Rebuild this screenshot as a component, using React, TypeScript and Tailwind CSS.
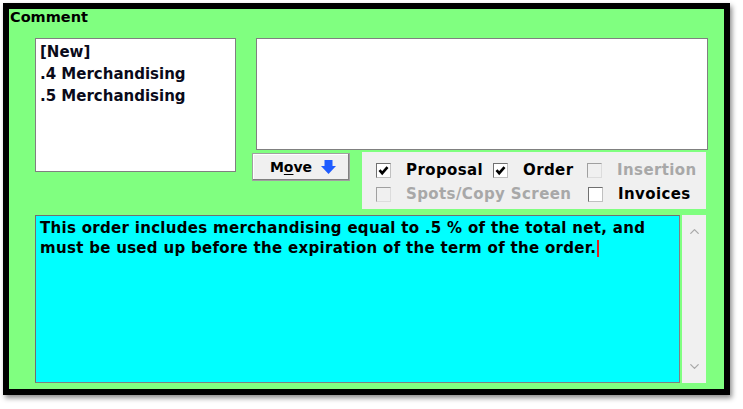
import React from "react";
import { ChevronUp, ChevronDown } from "lucide-react";

const font = "font-['DejaVu_Sans',sans-serif]";

const Check: React.FC<{ checked?: boolean; disabled?: boolean }> = ({ checked, disabled }) => (
    <span
        className={
            "inline-flex w-[15px] h-[15px] items-center justify-center border " +
            (disabled
                ? "border-t-[#a0a0a0] border-l-[#a0a0a0] border-b-[#dcdcdc] border-r-[#dcdcdc] bg-[#f0f0f0]"
                : "border-t-[#707070] border-l-[#707070] border-b-[#c0c0c0] border-r-[#c0c0c0] bg-white")
        }
    >
        {checked && (
            <svg width="11" height="11" viewBox="0 0 11 11">
                <path d="M1.5 5.2 L4.2 8.2 L9.5 2.2" fill="none" stroke="#000" strokeWidth="2.6" />
            </svg>
        )}
    </span>
);

const Item: React.FC<{ label: string; checked?: boolean; disabled?: boolean; w?: string }> = ({
    label,
    checked,
    disabled,
    w,
}) => (
    <div className={"flex items-center gap-[15px] " + (w ?? "")}>
        <Check checked={checked} disabled={disabled} />
        <span
            className={
                "text-[15px] font-bold leading-[18px] tracking-[0.4px] " +
                (disabled ? "text-[#a8a8a8]" : "text-black")
            }
        >
            {label}
        </span>
    </div>
);

const App: React.FC = () => {
    return (
        <div className={"w-[743px] h-[409px] bg-white pt-[3px] pl-[3px] " + font}>
            <div className="w-[727px] h-[392px] border-[6px] border-black bg-[#80ff80] shadow-[2px_3px_5px_rgba(0,0,0,0.45)]">
                {/* titel */}
                <div className="h-[29px] pl-[1px] text-[14.5px] font-bold leading-[17px] text-black">Comment</div>

                <div className="flex pl-[26px] gap-[16px] h-[171px]">
                    {/* lijst */}
                    <div className="w-[201px] h-[134px] bg-white border border-[#808080] pl-[4px] pt-[2px] text-[15px] font-bold leading-[22px] text-[#0a0a1a]">
                        <div>[New]</div>
                        <div>.4 Merchandising</div>
                        <div>.5 Merchandising</div>
                    </div>

                    <div className="w-[456px]">
                        <div className="ml-[4px] w-[452px] h-[112px] bg-white border border-[#808080]" />
                        <div className="flex items-start gap-[12px] mt-[2px]">
                            <button className="mt-[1px] w-[98px] h-[28px] flex items-center justify-center gap-[9px] pl-[4px] bg-[#f0f0f0] border border-[#a0a0a0] shadow-[inset_-1px_-1px_0_#808080,inset_1px_1px_0_#ffffff] text-[14px] font-bold text-black">
                                <span>
                                    M<span className="underline underline-offset-2">o</span>ve
                                </span>
                                <svg width="15" height="14" viewBox="0 0 15 14">
                                    <rect x="3.5" y="0" width="8" height="6" fill="#1f5cff" />
                                    <polygon points="0,6 15,6 7.5,14" fill="#1f5cff" />
                                </svg>
                            </button>
                            <div className="w-[344px] h-[57px] bg-[#f0f0f0] pl-[14px] pt-[9px] flex flex-col gap-[6px]">
                                <div className="flex">
                                    <Item label="Proposal" checked w="w-[117px]" />
                                    <Item label="Order" checked w="w-[94px]" />
                                    <Item label="Insertion" disabled />
                                </div>
                                <div className="flex">
                                    <Item label="Spots/Copy Screen" disabled w="w-[212px]" />
                                    <Item label="Invoices" />
                                </div>
                            </div>
                        </div>
                    </div>
                </div>

                {/* tekstvak */}
                <div className="flex pl-[26px] gap-[2px] mt-[6px]">
                    <div className="w-[645px] h-[168px] bg-[#00ffff] border border-t-[#707070] border-l-[#707070] border-b-[#808080] border-r-[#808080] pl-[4px] pt-[2px] text-[15px] font-bold leading-[20px] tracking-[0.3px] text-black whitespace-nowrap">
                        <div>This order includes merchandising equal to .5 % of the total net, and</div>
                        <div className="flex items-center">
                            must be used up before the expiration of the term of the order.
                            <span className="inline-block w-[2px] h-[17px] bg-[#e02020] ml-[1px]" />
                        </div>
                    </div>
                    <div className="w-[24px] h-[168px] bg-[#f0f0f0] flex flex-col items-center justify-between py-[9px]">
                        <ChevronUp size={15} strokeWidth={2} color="#a8a8a8" />
                        <ChevronDown size={15} strokeWidth={2} color="#a8a8a8" />
                    </div>
                </div>
            </div>
        </div>
    );
};

export default App;
